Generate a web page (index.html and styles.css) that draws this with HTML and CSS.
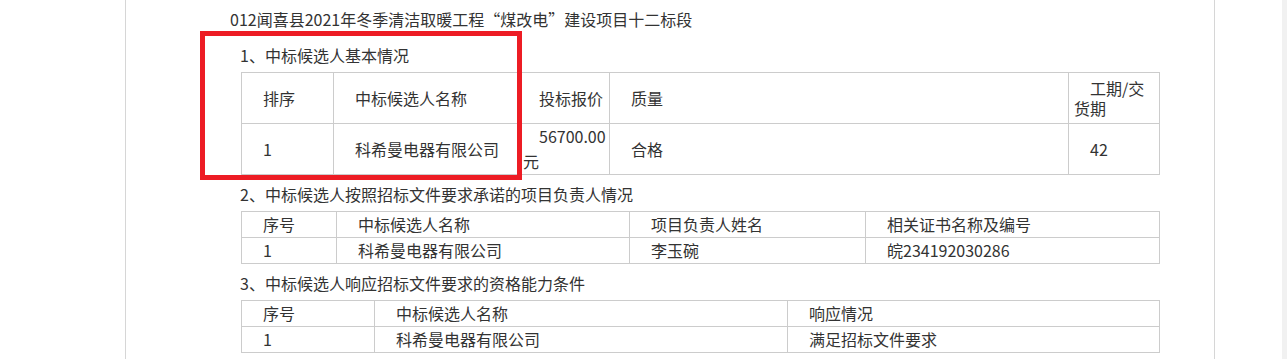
FILE: index.html
```html
<!DOCTYPE html>
<html lang="zh-CN">
<head>
<meta charset="utf-8">
<title>中标候选人公示</title>
<link rel="stylesheet" href="styles.css">
</head>
<body>
<div class="screen">
  <div class="gutter"></div>
  <main class="page">
    <p class="title">012闻喜县2021年冬季清洁取暖工程“煤改电”建设项目十二标段</p>

    <p class="heading">1、中标候选人基本情况</p>
    <table class="grid grid-main">
      <colgroup>
        <col class="c92"><col class="c184"><col class="c92"><col class="c459"><col class="c91">
      </colgroup>
      <tr class="tall">
        <td>排序</td>
        <td>中标候选人名称</td>
        <td>投标报价</td>
        <td>质量</td>
        <td class="tight">工期/交货期</td>
      </tr>
      <tr class="tall">
        <td>1</td>
        <td>科希曼电器有限公司</td>
        <td>56700.00元</td>
        <td>合格</td>
        <td>42</td>
      </tr>
    </table>

    <p class="heading">2、中标候选人按照招标文件要求承诺的项目负责人情况</p>
    <table class="grid">
      <colgroup>
        <col class="c95"><col class="c293"><col class="c236"><col class="c294">
      </colgroup>
      <tr>
        <td>序号</td>
        <td>中标候选人名称</td>
        <td>项目负责人姓名</td>
        <td>相关证书名称及编号</td>
      </tr>
      <tr>
        <td>1</td>
        <td>科希曼电器有限公司</td>
        <td>李玉碗</td>
        <td>皖234192030286</td>
      </tr>
    </table>

    <p class="heading">3、中标候选人响应招标文件要求的资格能力条件</p>
    <table class="grid">
      <colgroup>
        <col class="c133"><col class="c413"><col class="c372">
      </colgroup>
      <tr>
        <td>序号</td>
        <td>中标候选人名称</td>
        <td>响应情况</td>
      </tr>
      <tr>
        <td>1</td>
        <td>科希曼电器有限公司</td>
        <td>满足招标文件要求</td>
      </tr>
    </table>
  </main>
  <div class="rest"></div>
  <div class="scrolltrack"></div>
  <div class="highlight"></div>
</div>
</body>
</html>
```

FILE: styles.css
```css
html, body {
  margin: 0;
  padding: 0;
  height: 100%;
  background: #ffffff;
}

body {
  font-family: "Noto Sans CJK SC", "Microsoft YaHei", "Noto Sans", sans-serif;
  font-size: 16px;
  color: #333333;
  overflow: hidden;
}

.screen {
  position: relative;
  display: flex;
  height: 100%;
}

.gutter {
  width: 125px;
  flex: none;
}

.page {
  width: 1088px;
  flex: none;
  border-left: 1px solid #d6d6d6;
  border-right: 1px solid #d6d6d6;
  padding: 7px 0 0 115px;
  box-sizing: content-box;
  width: 973px;
}

.rest {
  flex: 1;
}

.scrolltrack {
  width: 5px;
  flex: none;
  background: #f1f1f1;
}

.title {
  margin: 0 0 0 -11px;
  line-height: 24px;
}

.heading {
  margin: 7px 0 5px -1px;
  line-height: 24px;
}

.title + .heading {
  margin-top: 12px;
}

.grid {
  border-collapse: collapse;
  table-layout: fixed;
  width: 919px;
}

.grid td {
  border: 1px solid #cccccc;
  padding: 0 5px;
  text-indent: 16px;
  line-height: 25px;
  height: 25px;
  vertical-align: middle;
  white-space: normal;
  word-break: normal;
}

.grid-main .tall td {
  height: 50px;
}

.grid-main td.tight {
  line-height: 20px;
}

.c92 { width: 92px; }
.c184 { width: 184px; }
.c459 { width: 459px; }
.c91 { width: 91px; }
.c95 { width: 95px; }
.c293 { width: 293px; }
.c236 { width: 236px; }
.c294 { width: 294px; }
.c133 { width: 133px; }
.c413 { width: 413px; }
.c372 { width: 372px; }

.highlight {
  position: absolute;
  left: 200px;
  top: 31px;
  width: 322px;
  height: 149px;
  box-sizing: border-box;
  border: 5px solid #ed1c24;
  pointer-events: none;
}
```
